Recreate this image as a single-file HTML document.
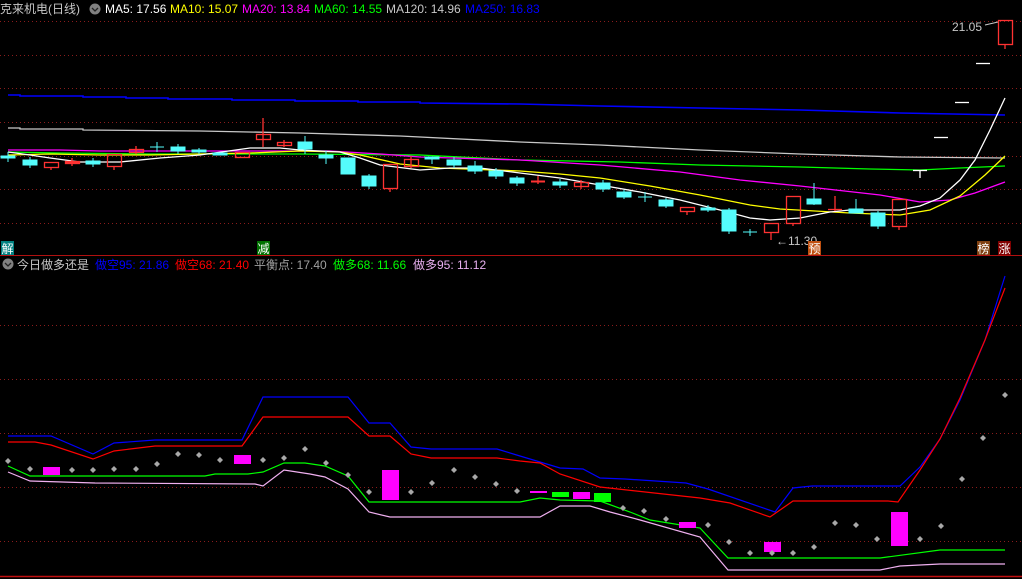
<!DOCTYPE html>
<html><head><meta charset="utf-8"><style>
html,body{margin:0;padding:0;background:#000;width:1022px;height:579px;overflow:hidden}
svg{display:block}
text{font-family:"Liberation Sans","Noto Sans CJK SC",sans-serif;font-size:12px}
</style></head><body>
<svg width="1022" height="579" viewBox="0 0 1022 579" xmlns="http://www.w3.org/2000/svg">
<rect width="1022" height="579" fill="#000"/>
<g stroke="#8a1c1c" stroke-width="1" stroke-dasharray="1,3">
<line x1="0" y1="21.5" x2="1022" y2="21.5"/><line x1="0" y1="55.5" x2="1022" y2="55.5"/>
<line x1="0" y1="88.5" x2="1022" y2="88.5"/><line x1="0" y1="122.5" x2="1022" y2="122.5"/>
<line x1="0" y1="156.5" x2="1022" y2="156.5"/><line x1="0" y1="189.5" x2="1022" y2="189.5"/>
<line x1="0" y1="223.5" x2="1022" y2="223.5"/>
<line x1="0" y1="325.5" x2="1022" y2="325.5"/><line x1="0" y1="379.5" x2="1022" y2="379.5"/>
<line x1="0" y1="433.5" x2="1022" y2="433.5"/><line x1="0" y1="487.5" x2="1022" y2="487.5"/>
<line x1="0" y1="541.5" x2="1022" y2="541.5"/>
</g>
<line x1="0" y1="255.5" x2="1022" y2="255.5" stroke="#b01010"/>
<line x1="0" y1="576.5" x2="1022" y2="576.5" stroke="#c01010" stroke-width="1.5"/>

<!-- MA lines -->
<g fill="none" stroke-width="1.3">
<polyline stroke="#0000ff" stroke-width="1.6" points="8,95 20,95 20,96 83,96 83,97 126,97 126,98 168,98 168,99 232,99 232,100 295,100 295,101 358,101 358,102 420,102 420,103 520,104 600,106 700,108 800,110 900,113 1005,115"/>
<polyline stroke="#c8c8c8" points="8,128 20,128 20,129 83,129 83,130 200,131 300,133 400,136 520,142 600,145 700,150 800,154 900,157 1005,158"/>
<polyline stroke="#00ff00" points="8,152 60,153 150,154 300,154 420,155 520,160 620,162 700,165 800,167 870,169 920,170 960,168 1005,166"/>
<polyline stroke="#ff00ff" points="8,150 60,150 100,151 330,151 380,154 420,157 520,160 600,165 680,172 740,180 800,186 880,195 920,202 950,200 975,193 1005,182"/>
<polyline stroke="#ffff00" points="8,155 50,154 100,155 150,155 200,154 250,153 300,151 340,152 360,155 400,164 440,168 520,171 560,174 600,178 650,186 700,195 750,205 780,209 850,213 900,215 930,210 960,196 985,175 1005,156"/>
<polyline stroke="#ffffff" points="8,152 30,155 50,158 80,162 120,162 160,158 200,155 250,148 280,148 300,150 340,152 360,158 380,165 420,170 450,168 480,168 520,173 560,178 600,185 640,192 680,200 720,210 750,218 770,220 800,218 830,212 850,210 900,210 920,206 940,198 960,180 975,160 990,130 1005,98"/>
</g>

<!-- candles -->
<g stroke="#54fcfc" fill="#54fcfc" stroke-width="1">
<line x1="8" y1="152" x2="8" y2="162"/><rect x="1" y="156" width="14" height="2"/>
<line x1="30" y1="157" x2="30" y2="168"/><rect x="23" y="160" width="14" height="5"/>
<line x1="93" y1="158" x2="93" y2="167"/><rect x="86" y="161" width="14" height="3"/>
<line x1="157" y1="142" x2="157" y2="152"/><line x1="150" y1="147" x2="164" y2="147"/>
<line x1="178" y1="144" x2="178" y2="154"/><rect x="171" y="147" width="14" height="4"/>
<line x1="199" y1="148" x2="199" y2="154"/><rect x="192" y="150" width="14" height="2"/>
<rect x="213" y="153" width="14" height="2"/>
<line x1="305" y1="136" x2="305" y2="154"/><rect x="298" y="142" width="14" height="7"/>
<line x1="326" y1="151" x2="326" y2="164"/><rect x="319" y="155" width="14" height="3"/>
<rect x="341" y="158" width="14" height="16"/>
<line x1="369" y1="174" x2="369" y2="189"/><rect x="362" y="176" width="14" height="10"/>
<line x1="432" y1="157" x2="432" y2="164"/><rect x="425" y="157" width="14" height="2"/>
<line x1="454" y1="157" x2="454" y2="168"/><rect x="447" y="160" width="14" height="5"/>
<line x1="475" y1="161" x2="475" y2="174"/><rect x="468" y="166" width="14" height="5"/>
<line x1="496" y1="168" x2="496" y2="179"/><rect x="489" y="171" width="14" height="5"/>
<line x1="517" y1="176" x2="517" y2="186"/><rect x="510" y="178" width="14" height="5"/>
<line x1="560" y1="179" x2="560" y2="188"/><rect x="553" y="182" width="14" height="3"/>
<line x1="603" y1="180" x2="603" y2="192"/><rect x="596" y="183" width="14" height="6"/>
<line x1="624" y1="190" x2="624" y2="199"/><rect x="617" y="192" width="14" height="5"/>
<line x1="645" y1="192" x2="645" y2="202"/><line x1="638" y1="197" x2="652" y2="197"/>
<line x1="666" y1="198" x2="666" y2="208"/><rect x="659" y="200" width="14" height="6"/>
<line x1="708" y1="205" x2="708" y2="212"/><rect x="701" y="208" width="14" height="2"/>
<line x1="729" y1="208" x2="729" y2="234"/><rect x="722" y="210" width="14" height="21"/>
<line x1="750" y1="229" x2="750" y2="236"/><line x1="743" y1="232" x2="757" y2="232"/>
<line x1="814" y1="183" x2="814" y2="205"/><rect x="807" y="199" width="14" height="5"/>
<line x1="856" y1="199" x2="856" y2="213"/><rect x="849" y="209" width="14" height="4"/>
<line x1="878" y1="211" x2="878" y2="229"/><rect x="871" y="213" width="14" height="13"/>
</g>
<g stroke="#ff3232" fill="none" stroke-width="1.3">
<rect x="44.5" y="162.5" width="14" height="5"/><line x1="51" y1="167" x2="51" y2="170"/>
<line x1="72" y1="158" x2="72" y2="166"/><rect x="65.5" y="161.5" width="14" height="2" fill="#ff3232"/>
<rect x="107.5" y="154.5" width="14" height="12"/><line x1="114" y1="166" x2="114" y2="170"/>
<line x1="136" y1="146" x2="136" y2="154"/><rect x="129.5" y="149.5" width="14" height="3"/>
<rect x="235.5" y="152.5" width="14" height="5"/>
<line x1="263" y1="118" x2="263" y2="147"/><rect x="256.5" y="134.5" width="14" height="5"/>
<line x1="284" y1="140" x2="284" y2="147"/><rect x="277.5" y="142.5" width="14" height="3"/>
<rect x="383.5" y="164.5" width="14" height="24"/><line x1="390" y1="188" x2="390" y2="192"/>
<line x1="411" y1="156" x2="411" y2="168"/><rect x="404.5" y="159.5" width="14" height="7"/>
<line x1="538" y1="176" x2="538" y2="184"/><line x1="531" y1="181.5" x2="545" y2="181.5" stroke-width="2"/>
<rect x="574.5" y="182.5" width="14" height="4"/><line x1="581" y1="180" x2="581" y2="189"/>
<rect x="680.5" y="207.5" width="14" height="4"/><line x1="687" y1="211" x2="687" y2="215"/>
<rect x="764.5" y="223.5" width="14" height="9"/><line x1="771" y1="232" x2="771" y2="240"/>
<rect x="786.5" y="196.5" width="14" height="27"/><line x1="793" y1="223" x2="793" y2="226"/>
<line x1="835" y1="196" x2="835" y2="211"/><line x1="828" y1="209.5" x2="842" y2="209.5"/>
<rect x="892.5" y="199.5" width="14" height="27"/><line x1="899" y1="226" x2="899" y2="230"/>
<rect x="998.5" y="20.5" width="14" height="24"/><line x1="1005" y1="44" x2="1005" y2="49"/>
</g>
<g stroke="#ffffff" stroke-width="1.3">
<line x1="913" y1="170.5" x2="927" y2="170.5"/><line x1="920" y1="170" x2="920" y2="178"/>
<line x1="934" y1="137.5" x2="948" y2="137.5"/>
<line x1="955" y1="102.5" x2="969" y2="102.5"/>
<line x1="976" y1="63.5" x2="990" y2="63.5"/>
</g>
<text x="952" y="31" fill="#c8c8c8">21.05</text>
<line x1="985" y1="25" x2="998" y2="22" stroke="#c8c8c8"/>
<text x="776" y="245" fill="#c8c8c8">←11.30</text>

<!-- tags -->
<rect x="1" y="241" width="13" height="14" fill="#008080"/><text x="1.5" y="253" fill="#fff">解</text>
<rect x="257" y="241" width="13" height="14" fill="#007000"/><text x="257.5" y="253" fill="#fff">减</text>
<rect x="808" y="241" width="13" height="14" fill="#c05010"/><text x="808.5" y="253" fill="#fff">预</text>
<rect x="977" y="241" width="13" height="14" fill="#804010"/><text x="977.5" y="253" fill="#fff">榜</text>
<rect x="998" y="241" width="13" height="14" fill="#800000"/><text x="998.5" y="253" fill="#fff">涨</text>

<!-- header 1 -->
<text x="0" y="13" fill="#c8c8c8" font-size="13">克来机电(日线)</text>
<circle cx="95" cy="9" r="5.5" fill="#808080"/><polyline points="92,8 95,11 98,8" fill="none" stroke="#222" stroke-width="1.3"/>
<text x="105" y="13" fill="#ffffff">MA5: 17.56</text>
<text x="170" y="13" fill="#ffff00">MA10: 15.07</text>
<text x="242" y="13" fill="#ff00ff">MA20: 13.84</text>
<text x="314" y="13" fill="#00ff00">MA60: 14.55</text>
<text x="386" y="13" fill="#c8c8c8">MA120: 14.96</text>
<text x="465" y="13" fill="#0000ff">MA250: 16.83</text>

<!-- header 2 -->
<circle cx="8" cy="264" r="5.5" fill="#808080"/><polyline points="5,263 8,266 11,263" fill="none" stroke="#222" stroke-width="1.3"/>
<text x="17" y="269" fill="#c8c8c8" font-size="13">今日做多还是</text>
<text x="95" y="269" fill="#0000ff">做空95: 21.86</text>
<text x="175" y="269" fill="#ff0000">做空68: 21.40</text>
<text x="254" y="269" fill="#a0a0a0">平衡点: 17.40</text>
<text x="333" y="269" fill="#00ff00">做多68: 11.66</text>
<text x="413" y="269" fill="#e8b0f0">做多95: 11.12</text>

<!-- bottom indicator -->
<g fill="none" stroke-width="1.2">
<polyline stroke="#0000ff" points="8,436 51,436 93,454 114,443 155,440 242,440 263,397 348,397 369,423 390,423 411,447 431,449 497,449 520,456 560,468 583,469 600,478 625,479 686,483 708,489 775,512 793,488 812,486 900,486 920,467 940,439 960,400 985,340 1005,276"/>
<polyline stroke="#ff0000" points="8,442 35,442 51,445 93,459 114,451 155,446 242,446 263,417 348,417 369,436 390,436 411,454 431,458 497,458 520,461 540,463 560,474 600,487 700,498 730,503 770,517 793,501 888,501 898,502 920,470 940,439 960,398 985,340 1005,288"/>
<polyline stroke="#00ff00" points="8,466 30,476 205,476 215,474 248,474 263,472 284,463 305,463 325,466 348,476 369,502 520,502 540,498 560,500 600,501 630,512 650,520 700,528 728,558 880,558 940,550 1005,550"/>
<polyline stroke="#f0b0f0" points="8,472 30,481 95,483 255,484 263,486 284,470 310,474 325,477 348,489 369,512 390,517 540,517 560,506 590,506 600,509 610,512 640,520 700,537 728,570 880,570 900,566 940,564 1005,564"/>
</g>
<g fill="#ff00ff">
<rect x="43" y="467" width="17" height="8"/><rect x="234" y="455" width="17" height="9"/>
<rect x="382" y="470" width="17" height="30"/><rect x="530" y="491" width="17" height="2"/>
<rect x="573" y="492" width="17" height="7"/><rect x="679" y="522" width="17" height="6"/>
<rect x="764" y="542" width="17" height="10"/><rect x="891" y="512" width="17" height="34"/>
</g>
<g fill="#00ff00"><rect x="552" y="492" width="17" height="5"/><rect x="594" y="493" width="17" height="9"/></g>
<g fill="#a8a8a8">
<path d="M8,458l3,3l-3,3l-3,-3z"/><path d="M30,466l3,3l-3,3l-3,-3z"/><path d="M72,467l3,3l-3,3l-3,-3z"/>
<path d="M93,467l3,3l-3,3l-3,-3z"/><path d="M114,466l3,3l-3,3l-3,-3z"/><path d="M136,466l3,3l-3,3l-3,-3z"/>
<path d="M157,461l3,3l-3,3l-3,-3z"/><path d="M178,451l3,3l-3,3l-3,-3z"/><path d="M199,452l3,3l-3,3l-3,-3z"/>
<path d="M220,457l3,3l-3,3l-3,-3z"/><path d="M263,457l3,3l-3,3l-3,-3z"/><path d="M284,455l3,3l-3,3l-3,-3z"/>
<path d="M305,446l3,3l-3,3l-3,-3z"/><path d="M326,460l3,3l-3,3l-3,-3z"/><path d="M348,472l3,3l-3,3l-3,-3z"/>
<path d="M369,489l3,3l-3,3l-3,-3z"/><path d="M411,489l3,3l-3,3l-3,-3z"/><path d="M432,480l3,3l-3,3l-3,-3z"/>
<path d="M454,467l3,3l-3,3l-3,-3z"/><path d="M475,474l3,3l-3,3l-3,-3z"/><path d="M496,481l3,3l-3,3l-3,-3z"/>
<path d="M517,488l3,3l-3,3l-3,-3z"/><path d="M623,505l3,3l-3,3l-3,-3z"/><path d="M644,508l3,3l-3,3l-3,-3z"/>
<path d="M666,516l3,3l-3,3l-3,-3z"/><path d="M708,522l3,3l-3,3l-3,-3z"/><path d="M729,539l3,3l-3,3l-3,-3z"/>
<path d="M750,550l3,3l-3,3l-3,-3z"/><path d="M772,550l3,3l-3,3l-3,-3z"/><path d="M793,550l3,3l-3,3l-3,-3z"/>
<path d="M814,544l3,3l-3,3l-3,-3z"/><path d="M835,520l3,3l-3,3l-3,-3z"/><path d="M856,522l3,3l-3,3l-3,-3z"/>
<path d="M877,536l3,3l-3,3l-3,-3z"/><path d="M920,536l3,3l-3,3l-3,-3z"/><path d="M941,523l3,3l-3,3l-3,-3z"/>
<path d="M962,476l3,3l-3,3l-3,-3z"/><path d="M983,435l3,3l-3,3l-3,-3z"/><path d="M1005,392l3,3l-3,3l-3,-3z"/>
</g>
</svg>
</body></html>
